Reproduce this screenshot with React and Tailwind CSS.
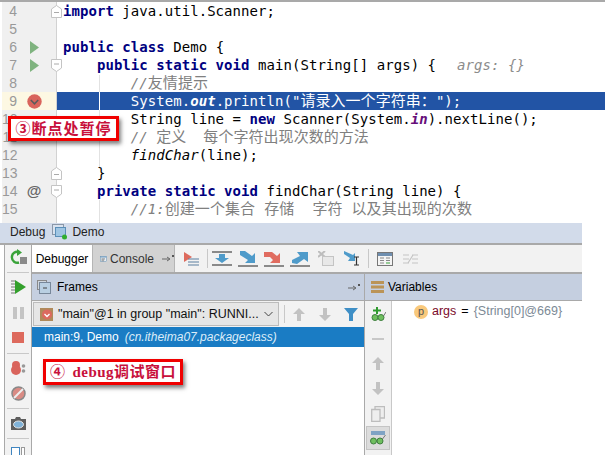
import React from "react";

const KW = ({ children }) => <span className="font-bold text-[#000080]">{children}</span>;
const Cjk = ({ children }) => <span className="text-[15px] not-italic">{children}</span>;
const Note = ({ children }) => <span className="italic text-[#808080]">{children}</span>;

const RunMark = () => (
  <svg width="9" height="13" viewBox="0 0 9 13"><path d="M0 0 L9 6.5 L0 13 Z" fill="#7fb37f" /></svg>
);

const BreakMark = () => (
  <svg width="15" height="15" viewBox="0 0 15 15">
    <circle cx="7.5" cy="7.5" r="7.2" fill="#d9645c" />
    <path d="M3.8 6 L7.5 9.8 L11.2 6" fill="none" stroke="#5b5b5b" strokeWidth="1.6" />
  </svg>
);

const FoldMark = ({ up }) => (
  <svg width="11" height="13" viewBox="0 0 11 13" className="block">
    <path
      d={up ? "M.5 12.5 V4 L5.5 .5 L10.5 4 V12.5 Z" : "M.5 .5 H10.5 V9 L5.5 12.5 L.5 9 Z"}
      fill="#fff"
      stroke="#c4c4c4"
    />
    <path d={up ? "M3 7.5 H8" : "M3 5 H8"} stroke="#aaa" />
  </svg>
);

const lines = [
  { n: 4, fold: "up", code: <><KW>import</KW> java.util.Scanner;</> },
  { n: 5, code: "" },
  { n: 6, mark: <RunMark />, code: <><KW>public class</KW> Demo {"{"}</> },
  {
    n: 7,
    mark: <RunMark />,
    fold: "down",
    code: (
      <>
        {"    "}<KW>public static void</KW> main(String[] args) {"{"}
        <span className="ml-[21px] italic text-[#8c8c8c]">args: {"{}"}</span>
      </>
    ),
  },
  { n: 8, code: <Note>{"        //"}<Cjk>友情提示</Cjk></Note> },
  {
    n: 9,
    active: true,
    mark: <BreakMark />,
    code: (
      <>
        {"        System."}<span className="font-bold italic">out</span>.println("<Cjk>请录入一个字符串：</Cjk>");
      </>
    ),
  },
  {
    n: 10,
    code: (
      <>
        {"        String line = "}<KW>new</KW> Scanner(System.<span className="font-bold italic text-[#660e7a]">in</span>).nextLine();
      </>
    ),
  },
  { n: 11, code: <Note>{"        // "}<Cjk>定义</Cjk>{"  "}<Cjk>每个字符出现次数的方法</Cjk></Note> },
  { n: 12, code: <>{"        "}<span className="italic">findChar</span>(line);</> },
  { n: 13, fold: "up", code: "    }" },
  {
    n: 14,
    mark: <span className="text-[15px] font-bold leading-[18px] text-[#666]">@</span>,
    fold: "down",
    code: <>{"    "}<KW>private static void</KW> findChar(String line) {"{"}</>,
  },
  { n: 15, code: <Note>{"        //1:"}<Cjk>创建一个集合 存储  字符 以及其出现的次数</Cjk></Note> },
];

function EditorRow({ line }) {
  return (
    <div className="flex h-[18px] leading-[18px]">
      <div
        className={`relative flex w-[57px] shrink-0 border-l-2 border-r border-white ${
          line.active ? "bg-[#fdf8e3]" : "bg-[#f0f0f0]"
        } border-r-[#d2d2d2]`}
      >
        <span className="w-[15px] text-right font-['Liberation_Sans',sans-serif] text-[14px] text-[#999999]">{line.n}</span>
        <span className="flex w-[34px] items-center justify-center font-['Liberation_Sans',sans-serif]">{line.mark}</span>
        {line.fold && (
          <span className="absolute right-[-6px] top-[3px] z-10">
            <FoldMark up={line.fold === "up"} />
          </span>
        )}
      </div>
      <div
        className={`relative flex-1 whitespace-pre pl-[6px] tracking-[0.05px] ${
          line.active ? "bg-[#2254a5] text-white" : "text-black"
        }`}
      >
        {line.code}
        {line.active && <span className="absolute left-[42px] top-0 h-[18px] w-px bg-white" />}
      </div>
    </div>
  );
}

const Sep = ({ className }) => <div className={`shrink-0 bg-[#c8c8c8] ${className}`} />;

const Slot = ({ className = "h-[25px]", children }) => (
  <div className={`flex w-full shrink-0 items-center justify-center ${className}`}>{children}</div>
);

const Rerun = () => (
  <svg width="17" height="16" viewBox="0 0 17 16">
    <path d="M9 3 A5.5 5.5 0 1 0 9 13.500" fill="none" stroke="#3aa33a" strokeWidth="2.4" />
    <path d="M7 0 L12 3.500 L7 7 Z" fill="#3aa33a" />
    <rect x="10" y="8" width="7" height="7" fill="#8a8a8a" />
  </svg>
);
const Resume = () => (
  <svg width="15" height="14" viewBox="0 0 15 14">
    <path d="M0 1 H4 M0 4 H4 M0 7 H4 M0 10 H4 M0 13 H4" stroke="#777" />
    <path d="M4 0 L15 7 L4 14 Z" fill="#33a02c" />
  </svg>
);
const Pause = () => (
  <svg width="11" height="12" viewBox="0 0 11 12"><path d="M0 0 H4 V12 H0 Z M7 0 H11 V12 H7 Z" fill="#c4c4c4" /></svg>
);
const Stop = () => <div className="h-[11px] w-[12px] bg-[#dd6a5d]" />;
const ViewBreaks = () => (
  <svg width="15" height="14" viewBox="0 0 15 14">
    <circle cx="5" cy="4" r="4" fill="#d9645c" />
    <circle cx="5" cy="9" r="5" fill="#d9645c" />
    <circle cx="12.500" cy="5" r="1.800" fill="#999" />
    <circle cx="12.500" cy="10" r="1.800" fill="#999" />
  </svg>
);
const Mute = () => (
  <svg width="15" height="15" viewBox="0 0 15 15">
    <circle cx="7.500" cy="7.500" r="6.500" fill="#d98b84" stroke="#888" strokeWidth="1.500" />
    <path d="M3 12 L12 3" stroke="#eee" strokeWidth="2" />
  </svg>
);
const Camera = () => (
  <svg width="15" height="13" viewBox="0 0 15 13">
    <path d="M0 2 H4 L5 0 H9 L10 2 H15 V13 H0 Z" fill="#5e5e5e" />
    <ellipse cx="7.500" cy="7.500" rx="5" ry="3.500" fill="#7fb2d8" stroke="#e5e5e5" />
  </svg>
);
const Layout = () => (
  <svg width="14" height="8" viewBox="0 0 14 8" className="block">
    <rect x=".5" y=".5" width="8" height="11" fill="#fff" stroke="#3f85c0" />
    <rect x="10.500" y=".5" width="3" height="11" fill="#fff" stroke="#999" />
  </svg>
);

const StepIcon = ({ d, color }) => (
  <svg width="20" height="16" viewBox="0 0 20 16">
    <path d={d} fill={color} />
    <rect x="0" y="14" width="20" height="2" fill="#8a8a8a" />
  </svg>
);

const ToolIcons = [
  <svg key="over" width="20" height="15" viewBox="0 0 20 15">
    <rect x="0" y="0" width="20" height="2" fill="#8a8a8a" />
    <rect x="0" y="13" width="20" height="2" fill="#8a8a8a" />
    <path d="M7 3 H13 V7 H17 L10 12 L3 7 H7 Z" fill="#4f9bca" />
  </svg>,
  <StepIcon key="into" color="#4f9bca" d="M2 0 L7 0 L14 5 L17 2 V12 H7 L10 9 L2 4 Z" />,
  <StepIcon key="force" color="#e06c60" d="M0 1 H8 L13 5 L16 2 V12 H6 L9 9 L6 6 H0 Z" />,
  <StepIcon key="out" color="#4f9bca" d="M2 12 V9 L10 5 L7 1 H18 V11 L14 8 L7 13 Z" />,
  <svg key="drop" width="16" height="15" viewBox="0 0 16 15">
    <path d="M0 0 L7 6 M7 0 L0 6" stroke="#bdbdbd" strokeWidth="2" />
    <rect x="4.500" y="5.500" width="11" height="9" fill="#e8e8e8" stroke="#c4c4c4" />
  </svg>,
  <svg key="cursor" width="16" height="15" viewBox="0 0 16 15">
    <path d="M0 0 L9 4 L11 2 V10 H4 L6 7 L0 3 Z" fill="#4f9bca" />
    <path d="M10 6 H15 M12.500 6 V14 M10 14 H15" stroke="#333" strokeWidth="1.200" fill="none" />
  </svg>,
];

const Calendar = () => (
  <svg width="16" height="14" viewBox="0 0 16 14">
    <rect x=".5" y=".5" width="15" height="13" fill="#f4f4f4" stroke="#777" />
    <rect x="1" y="1" width="14" height="3" fill="#6f8fb0" />
    <path d="M3 6 H7 M9 6 H13 M3 8.500 H7 M9 8.500 H13 M3 11 H7" stroke="#888" />
    <path d="M9 11 H13" stroke="#3aa33a" />
  </svg>
);
const Nested = () => (
  <svg width="15" height="12" viewBox="0 0 15 12">
    <path d="M0 2 H6 M0 6 H6 M0 10 H6 M9 2 H15 M9 6 H15 M9 10 H15 M5 10 L10 2" stroke="#c4c4c4" strokeWidth="1.200" />
  </svg>
);

const ArrowUp = () => (
  <svg width="12" height="13" viewBox="0 0 12 13"><path d="M6 0 L12 6 H8 V13 H4 V6 H0 Z" fill="#c2c2c2" /></svg>
);
const ArrowDown = () => (
  <svg width="12" height="13" viewBox="0 0 12 13"><path d="M6 13 L0 7 H4 V0 H8 V7 H12 Z" fill="#c2c2c2" /></svg>
);
const Funnel = () => (
  <svg width="14" height="13" viewBox="0 0 14 13"><path d="M0 0 H14 L9 6 V13 H5 V6 Z" fill="#3f8fc6" /></svg>
);
const Glasses = () => (
  <svg width="16" height="14" viewBox="0 0 16 14" className="block">
    <rect x="1" y="0" width="14" height="4" fill="#7fa3c4" />
    <circle cx="3.500" cy="10" r="3" fill="#6fbf5f" stroke="#3f7f3f" />
    <circle cx="10" cy="10" r="3" fill="#6fbf5f" stroke="#3f7f3f" />
    <path d="M12.500 8 L15.500 4" stroke="#777" />
  </svg>
);
const AddWatch = () => (
  <svg width="15" height="14" viewBox="0 0 15 14">
    <path d="M6 0 V7 M2 3.500 H10" stroke="#2f9a2f" strokeWidth="2" />
    <circle cx="4" cy="10.500" r="3" fill="#6fbf5f" stroke="#3f7f3f" />
    <circle cx="10" cy="10.500" r="3" fill="#6fbf5f" stroke="#3f7f3f" />
    <path d="M12.500 9 L15 5" stroke="#777" />
  </svg>
);
const Copy = () => (
  <svg width="14" height="16" viewBox="0 0 14 16">
    <path d="M4 .5 H13.500 V12 H4 Z" fill="#eee" stroke="#bdbdbd" strokeWidth="1.300" />
    <path d="M.7 3.500 H9 V15.300 H.7 Z" fill="#eee" stroke="#bdbdbd" strokeWidth="1.300" />
  </svg>
);

const Pin = () => (
  <svg width="12" height="7" viewBox="0 0 12 7">
    <path d="M0 4 H7 M5 2 L8 4 L5 6" fill="none" stroke="#666" />
    <rect x="10" y="0" width="2" height="2" fill="#555" />
  </svg>
);

function DebugPanel() {
  return (
    <div className="flex h-[232px] w-[582px] flex-col font-['Liberation_Sans','Noto_Sans_CJK_SC',sans-serif] text-[12px] text-black">
      <div className="flex h-[20px] shrink-0 items-center gap-[4px] bg-[#d2dbea] pb-[3px] pl-[10px] text-[#222]">
        Debug
        <svg width="16" height="16" viewBox="0 0 16 16" className="ml-[3px]">
          <rect x=".5" y=".5" width="11" height="10" fill="#d9e2ee" stroke="#8a97a8" />
          <rect x="3.500" y="3.500" width="10" height="9" fill="#9fc5e3" stroke="#5b8fb8" />
          <circle cx="12.500" cy="13" r="2.500" fill="#2fae2f" />
        </svg>
        Demo
      </div>
      <div className="flex min-h-0 flex-1 border-t-2 border-[#a9a9a9] bg-white pl-[4px]">
        <div className="flex w-[28px] shrink-0 flex-col items-center overflow-hidden border-x border-[#a9a9a9] bg-[#f2f2f2]">
          <Slot className="h-[27px] pb-[3px]"><Rerun /></Slot>
          <Sep className="h-px w-[22px]" />
          <Slot className="h-[28px]"><Resume /></Slot>
          <Slot className="h-[23px]"><Pause /></Slot>
          <Slot className="h-[26px]"><Stop /></Slot>
          <Sep className="mt-[3px] h-px w-[22px]" />
          <Slot className="h-[28px]"><ViewBreaks /></Slot>
          <Slot className="h-[22px]"><Mute /></Slot>
          <Sep className="mt-[4px] h-px w-[22px]" />
          <Slot className="h-[29px]"><Camera /></Slot>
          <Sep className="h-px w-[22px]" />
          <Slot className="h-[16px] pt-[8px]"><Layout /></Slot>
        </div>
        <div className="flex min-w-0 flex-1 flex-col">
          <div className="flex h-[29px] shrink-0 border-b-2 border-[#a9a9a9] bg-[#f2f2f2]">
            <div className="flex w-[60px] items-center justify-center bg-white">Debugger</div>
            <div className="flex w-[83px] items-center border-x border-[#b5b5b5] bg-[#d2d2d2] pl-[7px] text-[#333]">
              <svg width="14" height="12" viewBox="0 0 14 12" className="mr-[3px]">
                <rect x=".5" y=".5" width="13" height="11" fill="#e8eef4" stroke="#5f88a8" />
                <rect x="1" y="1" width="12" height="2" fill="#6f9cc0" />
                <path d="M3 5.500 H10 M3 7.500 H9 M3 9.500 H8" stroke="#555" />
              </svg>
              Console
              <span className="ml-[8px]"><Pin /></span>
            </div>
            <div className="flex w-[32px] items-center justify-center">
              <svg width="15" height="14" viewBox="0 0 15 14">
                <path d="M0 0 L8 5 L0 10 Z" fill="#dd6a5d" />
                <path d="M4 7 H15 M4 10 H15 M4 13 H15" stroke="#5a7fa0" />
              </svg>
            </div>
            <Sep className="my-[4px] w-px" />
            <div className="flex pl-[1px]">
              {ToolIcons.map((icon, i) => (
                <div key={i} className="flex w-[26px] items-center justify-center">{icon}</div>
              ))}
            </div>
            <Sep className="my-[4px] ml-[3px] w-px" />
            <div className="flex w-[32px] items-center justify-center"><Calendar /></div>
            <div className="flex w-[18px] items-center justify-center"><Nested /></div>
          </div>
          <div className="flex min-h-0 flex-1">
            <div className="flex w-[333px] shrink-0 flex-col border-r border-[#a9a9a9]">
              <div className="flex h-[27px] shrink-0 items-center gap-[6px] border-b border-[#a9a9a9] bg-[#c5cfe0] pl-[5px]">
                <svg width="14" height="14" viewBox="0 0 14 14">
                  <rect x=".5" y=".5" width="9" height="9" fill="#cfd6de" stroke="#8a8a8a" />
                  <rect x="2.500" y="2.500" width="11" height="11" fill="#b9cfe2" stroke="#77879a" />
                  <path d="M6 8 H10" stroke="#444" />
                </svg>
                Frames
                <span className="ml-auto mr-[4px]"><Pin /></span>
              </div>
              <div className="flex h-[26px] shrink-0 items-center bg-[#f2f2f2]">
                <div className="ml-[1px] flex h-[24px] w-[247px] items-center border border-[#bcbcbc] bg-[#e6e6e6] pl-[6px] text-[12.500px] text-[#111]">
                  <svg width="13" height="13" viewBox="0 0 13 13" className="mr-[5px] shrink-0">
                    <rect width="13" height="13" fill="#b08a5a" />
                    <circle cx="7" cy="6.500" r="5" fill="#dc6a5f" />
                    <path d="M4.500 6 L7 8.500 L9.500 6" fill="none" stroke="#fff" strokeWidth="1.300" />
                  </svg>
                  <span className="whitespace-nowrap">"main"@1 in group "main": RUNNI...</span>
                  <svg width="9" height="6" viewBox="0 0 9 6" className="ml-auto mr-[5px] shrink-0">
                    <path d="M.5 1 L4.500 5 L8.500 1" fill="none" stroke="#444" />
                  </svg>
                </div>
                <Sep className="ml-[5px] h-[18px] w-px" />
                <div className="flex w-[27px] justify-center pl-[1px]"><ArrowUp /></div>
                <div className="flex w-[26px] justify-center"><ArrowDown /></div>
                <div className="flex w-[26px] justify-center"><Funnel /></div>
              </div>
              <div className="flex h-[20px] shrink-0 items-center bg-[#1a7cc4] pl-[12px] text-white">
                main:9, Demo<span className="ml-[6px] italic text-[#dcecf8]">(cn.itheima07.packageclass)</span>
              </div>
            </div>
            <div className="flex min-w-0 flex-1 flex-col">
              <div className="flex h-[27px] shrink-0 items-center gap-[4px] border-b border-[#a9a9a9] bg-[#c5cfe0] pl-[6px]">
                <svg width="13" height="12" viewBox="0 0 13 12">
                  <path d="M0 0 H13 V3 H0 Z M0 4.500 H13 V7.500 H0 Z M0 9 H13 V12 H0 Z" fill="#bb9457" />
                </svg>
                Variables
              </div>
              <div className="flex flex-1">
                <div className="flex w-[27px] shrink-0 flex-col items-center border-r border-[#c8c8c8] bg-[#f2f2f2]">
                  <Slot><AddWatch /></Slot>
                  <Slot><div className="h-[2px] w-[12px] bg-[#c8c8c8]" /></Slot>
                  <Slot><ArrowUp /></Slot>
                  <Slot><ArrowDown /></Slot>
                  <Slot><Copy /></Slot>
                  <div className="flex h-[24px] w-[24px] items-center justify-center border border-[#c4c4c4] bg-[#dcdcdc]"><Glasses /></div>
                </div>
                <div className="flex h-[21px] items-center pl-[22px] text-[12.500px]">
                  <span className="mr-[4px] flex h-[14px] w-[14px] items-center justify-center rounded-full bg-[#f9c97c] text-[11px] leading-none text-[#555]">p</span>
                  <span className="font-medium text-[#7a0a2a]">args</span>
                  <span className="mx-[5px]">=</span>
                  <span className="text-[#7c8a96]">{"{String[0]@669}"}</span>
                </div>
              </div>
            </div>
          </div>
        </div>
      </div>
    </div>
  );
}

export default function App() {
  return (
    <div className="relative h-[458px] w-[608px] overflow-hidden bg-white">
      <div className="relative w-[605px] border-t-2 border-[#a9a9a9] font-['DejaVu_Sans_Mono','Noto_Sans_CJK_SC',monospace] text-[14px]">
        <div className="absolute left-[99px] top-[73px] h-[92px] w-px bg-[#e2e2e2]" />
        <div className="absolute left-[99px] top-[198px] h-[23px] w-px bg-[#e2e2e2]" />
        {lines.map((line) => (
          <EditorRow key={line.n} line={line} />
        ))}
        <div className="flex h-[5px]">
          <div className="ml-[2px] w-[55px] border-r border-[#d2d2d2] bg-[#f0f0f0]" />
        </div>
      </div>
      <DebugPanel />

      {/* callouts sit on top of the screenshot */}
      <div className="absolute left-[8px] top-[116px] flex h-[25px] w-[111px] items-center justify-center whitespace-nowrap border-[3px] border-[#f00000] bg-white font-['Noto_Sans_CJK_SC',sans-serif] text-[15px] font-bold tracking-[1px] text-[#c8103c] shadow-[2px_3px_4px_rgba(0,0,0,0.5)]">
        ③断点处暂停
      </div>
      <div className="absolute left-[43px] top-[359px] flex h-[26px] w-[140px] items-center justify-center gap-[7px] whitespace-nowrap border-[3px] border-[#f00000] bg-white font-['Liberation_Serif','Noto_Sans_CJK_SC',serif] text-[15px] font-bold tracking-[0.5px] text-[#c8103c] shadow-[2px_3px_4px_rgba(0,0,0,0.5)]">
        <span>④</span>
        <span>debug调试窗口</span>
      </div>
    </div>
  );
}
